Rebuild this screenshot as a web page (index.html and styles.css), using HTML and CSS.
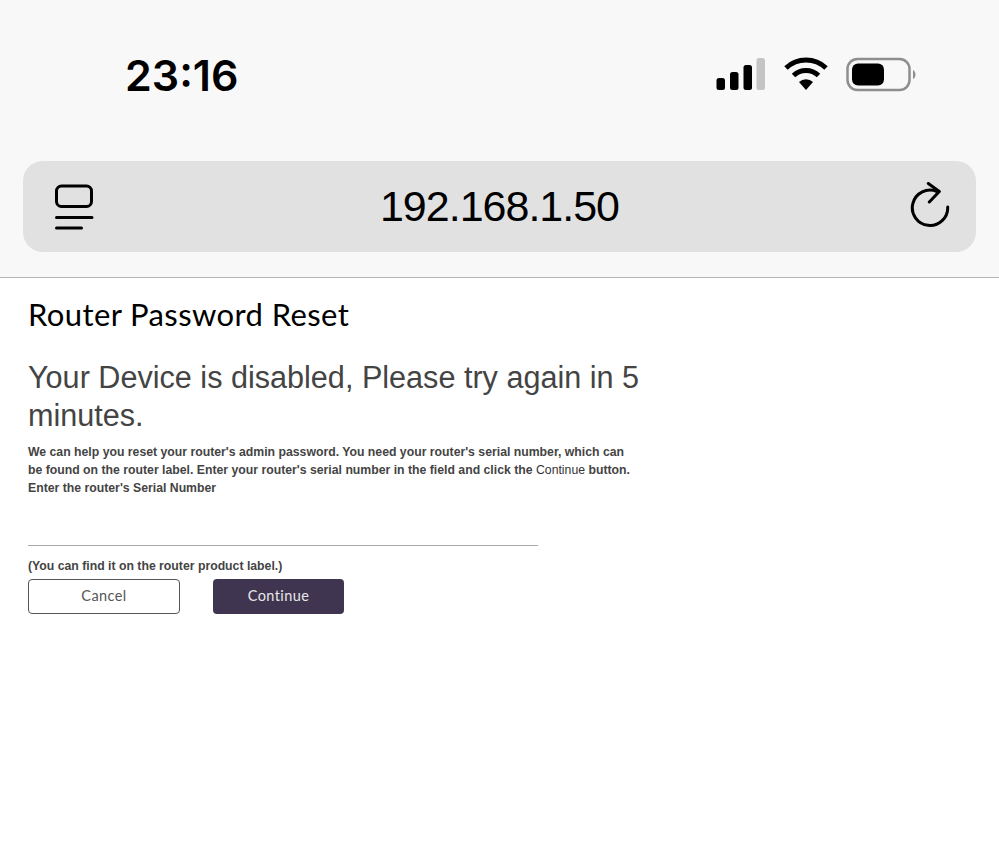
FILE: index.html
```html
<!DOCTYPE html>
<html lang="en">
<head>
    <meta charset="UTF-8">
    <title>Router Password Reset</title>
    <link rel="stylesheet" href="styles.css">
</head>
<body>
    <header class="chrome">
        <div class="status">
            <span class="time">23:16</span>
            <div class="status-icons">
                <svg class="signal" width="50" height="34" viewBox="0 0 50 34">
                    <rect x="0.500" y="21" width="8.500" height="12" rx="2.500" fill="#000"/>
                    <rect x="14" y="15" width="8.500" height="18" rx="2.500" fill="#000"/>
                    <rect x="27.500" y="8" width="8.500" height="25" rx="2.500" fill="#000"/>
                    <rect x="40.500" y="1" width="8.500" height="32" rx="2.500" fill="#c4c4c4"/>
                </svg>
                <svg class="wifi" width="44" height="34" viewBox="0 0 44 34">
                    <path d="M2 11 A29 29 0 0 1 42 11" fill="none" stroke="#000" stroke-width="5"/>
                    <path d="M9.500 18.500 A18 18 0 0 1 34.500 18.500" fill="none" stroke="#000" stroke-width="5"/>
                    <path d="M15 25 L22 33 L29 25 A10 10 0 0 0 15 25 Z" fill="#000"/>
                </svg>
                <svg class="battery" width="72" height="36" viewBox="0 0 72 36">
                    <rect x="1.500" y="2" width="62" height="31" rx="10" fill="none" stroke="#8e8e8e" stroke-width="2.500"/>
                    <rect x="6" y="6.500" width="32" height="22" rx="6" fill="#000"/>
                    <path d="M67 13 C70 14 70.500 21 67 22 Z" fill="#8e8e8e"/>
                </svg>
            </div>
        </div>
        <div class="address">
            <svg class="tabs" width="40" height="50" viewBox="0 0 40 50">
                <rect x="2.500" y="4" width="35" height="20.500" rx="5" fill="none" stroke="#000" stroke-width="3"/>
                <path d="M2.500 35.500 H38 M2.500 46 H27.500" fill="none" stroke="#000" stroke-width="3" stroke-linecap="round"/>
            </svg>
            <span class="url">192.168.1.50</span>
            <svg class="reload" width="40" height="50" viewBox="0 0 40 50">
                <path d="M27 9.500 A17.700 17.700 0 1 0 37.700 25" fill="none" stroke="#000" stroke-width="3" stroke-linecap="round"/>
                <path d="M18.300 1.500 L29.300 9.500 L19.300 20" fill="none" stroke="#000" stroke-width="3" stroke-linecap="round" stroke-linejoin="round"/>
            </svg>
        </div>
    </header>
    <main class="content">
        <h1>Router Password Reset</h1>
        <h2>Your Device is disabled, Please try again in 5 minutes.</h2>
        <p class="help">We can help you reset your router's admin password. You need your router's serial number, which can be found on the router label. Enter your router's serial number in the field and click the <span class="plain">Continue</span> button.<br>Enter the router's Serial Number</p>
        <input class="serial" type="text">
        <p class="hint">(You can find it on the router product label.)</p>
        <div class="buttons">
            <button class="btn cancel">Cancel</button>
            <button class="btn continue">Continue</button>
        </div>
    </main>
</body>
</html>
```
FILE: styles.css
```css
body {
    margin: 0;
    background-color: white;
    font-family: "Liberation Sans", Arial, sans-serif;
}
.chrome {
    height: 278px;
    box-sizing: border-box;
    background-color: #f8f8f8;
    border-bottom: 1px solid #b5b5b5;
    padding: 0 23px;
}
.status {
    height: 161px;
    display: flex;
    justify-content: space-between;
    padding: 47px 58px 0 102px;
    box-sizing: border-box;
}
.time {
    font-family: Inter, sans-serif;
    font-size: 43px;
    font-weight: 600;
    line-height: 56px;
    color: black;
}
.status-icons {
    display: flex;
    gap: 18px;
    height: 36px;
    margin-top: 10px;
}
.address {
    height: 91px;
    background-color: #e1e1e1;
    border-radius: 20px;
    display: flex;
    justify-content: space-between;
    align-items: center;
    padding: 0 26px 0 31px;
}
.url {
    margin-right: 5px;
    font-family: "Liberation Sans", sans-serif;
    font-size: 43px;
    letter-spacing: -1px;
    color: black;
}
.content {
    padding: 0 28px;
}
h1 {
    margin: 17px 0 0;
    font-family: Lato, sans-serif;
    font-size: 31px;
    font-weight: 400;
    letter-spacing: 0.4px;
    line-height: 38px;
    color: black;
}
h2 {
    width: 620px;
    margin: 25px 0 0;
    font-size: 30.600px;
    font-weight: 400;
    line-height: 38px;
    color: #444;
}
.help {
    width: 610px;
    margin: 9px 0 0;
    font-size: 12.250px;
    font-weight: bold;
    line-height: 18px;
    color: #444;
}
.plain {
    font-weight: 400;
    color: #333;
}
.serial {
    display: block;
    width: 510px;
    height: 38px;
    box-sizing: border-box;
    border: none;
    border-bottom: 1px solid #aaa;
    margin-top: 11px;
    outline: none;
}
.hint {
    margin: 11px 0 0;
    font-size: 12.250px;
    font-weight: bold;
    line-height: 18px;
    color: #444;
}
.buttons {
    display: flex;
    gap: 33px;
    margin-top: 4px;
}
.btn {
    height: 35px;
    border-radius: 4px;
    font-family: Lato, sans-serif;
    font-size: 14.500px;
    font-weight: 400;
    letter-spacing: 0.4px;
    padding: 0 0 2px;
}
.cancel {
    width: 152px;
    background-color: white;
    border: 1px solid #555;
    color: #555;
}
.continue {
    width: 131px;
    background-color: #3f3550;
    border: none;
    color: #e8e8e8;
}
```
